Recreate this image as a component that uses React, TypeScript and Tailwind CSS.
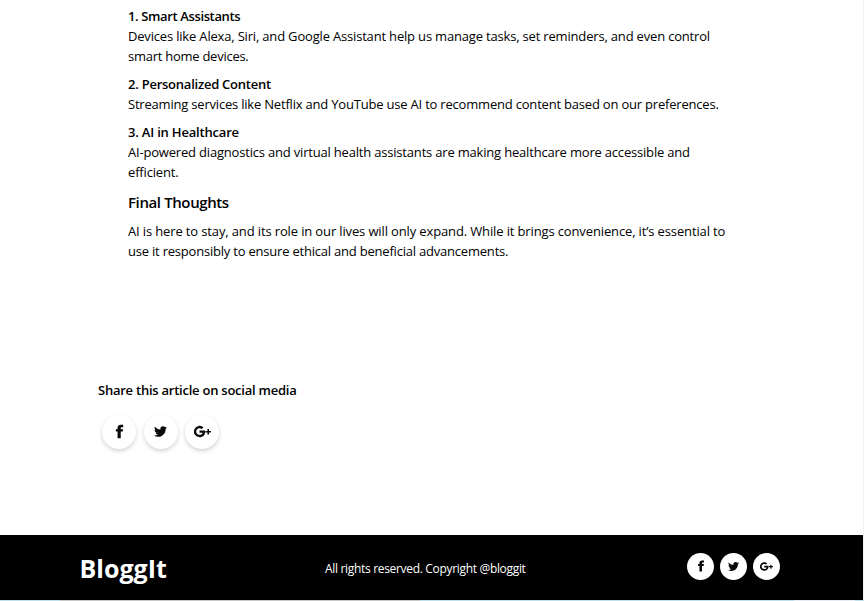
import type { ReactNode } from "react";

const icons = {
  facebook: "M14 8.2V6.3c0-.8.5-1.2 1.4-1.2H17.900V1.200h-3.700C10.600 1.200 8.900 3 8.900 5.800v2.400H6.200V12h2.700v10.800H14V12h3.300l.5-3.800z",
  twitter: "M23.953 4.570a10 10 0 0 1-2.825.775 4.958 4.958 0 0 0 2.163-2.723 9.900 9.900 0 0 1-3.127 1.184 4.920 4.920 0 0 0-8.384 4.482C7.690 8.095 4.067 6.130 1.640 3.162a4.900 4.900 0 0 0-.666 2.475c0 1.710.870 3.213 2.188 4.096a4.900 4.900 0 0 1-2.228-.616v.060a4.923 4.923 0 0 0 3.946 4.827 5 5 0 0 1-2.212.085 4.936 4.936 0 0 0 4.604 3.417 9.867 9.867 0 0 1-6.102 2.105c-.39 0-.779-.023-1.170-.067a13.995 13.995 0 0 0 7.557 2.209c9.053 0 13.998-7.496 13.998-13.985 0-.21 0-.42-.015-.63a9.935 9.935 0 0 0 2.413-2.568z",
  google: "M7.800 10.500v3.200h4.500c-.6 1.800-2 3-4.400 3A4.700 4.700 0 1 1 11 8.500l2.400-2.300A8 8 0 1 0 7.900 20c4.700 0 7.900-3.200 7.900-7.800 0-.6-.1-1.200-.2-1.700zM19 8.600v2.700h-2.700v2.100H19v2.700h2.200v-2.700h2.700v-2.100h-2.700V8.600z",
};

function Icon({ name, className }: { name: keyof typeof icons; className: string }) {
  return (
    <svg viewBox="0 0 24 24" className={className} fill="#080808" aria-hidden="true">
      <path d={icons[name]} />
    </svg>
  );
}

function Line({ track, children }: { track: string; children: ReactNode }) {
  return <span className={`block whitespace-nowrap ${track}`}>{children}</span>;
}

export default function App() {
  return (
    <div className="flex h-[601px] w-[864px] flex-col overflow-hidden bg-white font-['Open_Sans','Noto_Sans',sans-serif] text-[13px] leading-5 text-black">
      <div className="flex min-h-0 flex-1">
        <div className="flex flex-1 flex-col">
          <article className="ml-32 flex flex-col pt-1.5">
            <section className="mb-2">
              <h3 className="font-semibold"><Line track="tracking-[-0.37px]">1. Smart Assistants</Line></h3>
              <p>
                <Line track="tracking-[-0.18px]">Devices like Alexa, Siri, and Google Assistant help us manage tasks, set reminders, and even control</Line>
                <Line track="tracking-[-0.26px]">smart home devices.</Line>
              </p>
            </section>
            <section className="mb-2">
              <h3 className="font-semibold"><Line track="tracking-[-0.24px]">2. Personalized Content</Line></h3>
              <p><Line track="tracking-[-0.2px]">Streaming services like Netflix and YouTube use AI to recommend content based on our preferences.</Line></p>
            </section>
            <section className="mb-2">
              <h3 className="font-semibold"><Line track="tracking-[-0.19px]">3. AI in Healthcare</Line></h3>
              <p>
                <Line track="tracking-[-0.19px]">AI-powered diagnostics and virtual health assistants are making healthcare more accessible and</Line>
                <Line track="tracking-[-0.17px]">efficient.</Line>
              </p>
            </section>
            <h2 className="mt-px mb-[7px] text-[15px] leading-[23px] font-semibold"><Line track="tracking-[-0.39px]">Final Thoughts</Line></h2>
            <p>
              <Line track="tracking-[-0.135px]">AI is here to stay, and its role in our lives will only expand. While it brings convenience, it’s essential to</Line>
              <Line track="tracking-[-0.21px]">use it responsibly to ensure ethical and beneficial advancements.</Line>
            </p>
          </article>
          <section className="mt-[119px] ml-[98px]">
            <h3 className="font-semibold"><Line track="tracking-[-0.24px]">Share this article on social media</Line></h3>
            <div className="mt-[15px] ml-1 flex gap-[7.5px]">
              {(["facebook", "twitter", "google"] as const).map((name) => (
                <a key={name} className="flex size-[34px] items-center justify-center rounded-full bg-white shadow-[0_2px_4px_rgba(0,0,0,0.18)]">
                  <Icon name={name} className={name === "google" ? "mb-px size-[17px]" : name === "twitter" ? "mb-px size-[13px]" : "mb-px size-[15px]"} />
                </a>
              ))}
            </div>
          </section>
          <footer className="mt-auto flex h-[65px] items-center bg-black text-white">
            <div className="ml-[79.5px] w-[245.5px] pt-px text-[25px] leading-8 font-bold">BloggIt</div>
            <p className="w-[362px] pt-[3px] text-[12px]"><Line track="tracking-[-0.32px]">All rights reserved. Copyright @bloggit</Line></p>
            <div className="mb-[3px] flex gap-1.5">
              {(["facebook", "twitter", "google"] as const).map((name) => (
                <a key={name} className="flex size-[27px] items-center justify-center rounded-full bg-white">
                  <Icon name={name} className={name === "google" ? "size-[13px]" : name === "twitter" ? "size-[11px]" : "size-[12px]"} />
                </a>
              ))}
            </div>
          </footer>
        </div>
        <div className="w-px bg-[#f0f0f0]" />
      </div>
      <div className="flex h-px">
        <div className="w-[60px] bg-[#bfdfea]" />
        <div className="w-[360px] bg-[#c8c8c8]" />
        <div className="w-[374px] bg-[#bfdfea]" />
        <div className="w-[61px] bg-[#e8edf5]" />
        <div className="flex-1 bg-[#bfdfea]" />
      </div>
    </div>
  );
}
